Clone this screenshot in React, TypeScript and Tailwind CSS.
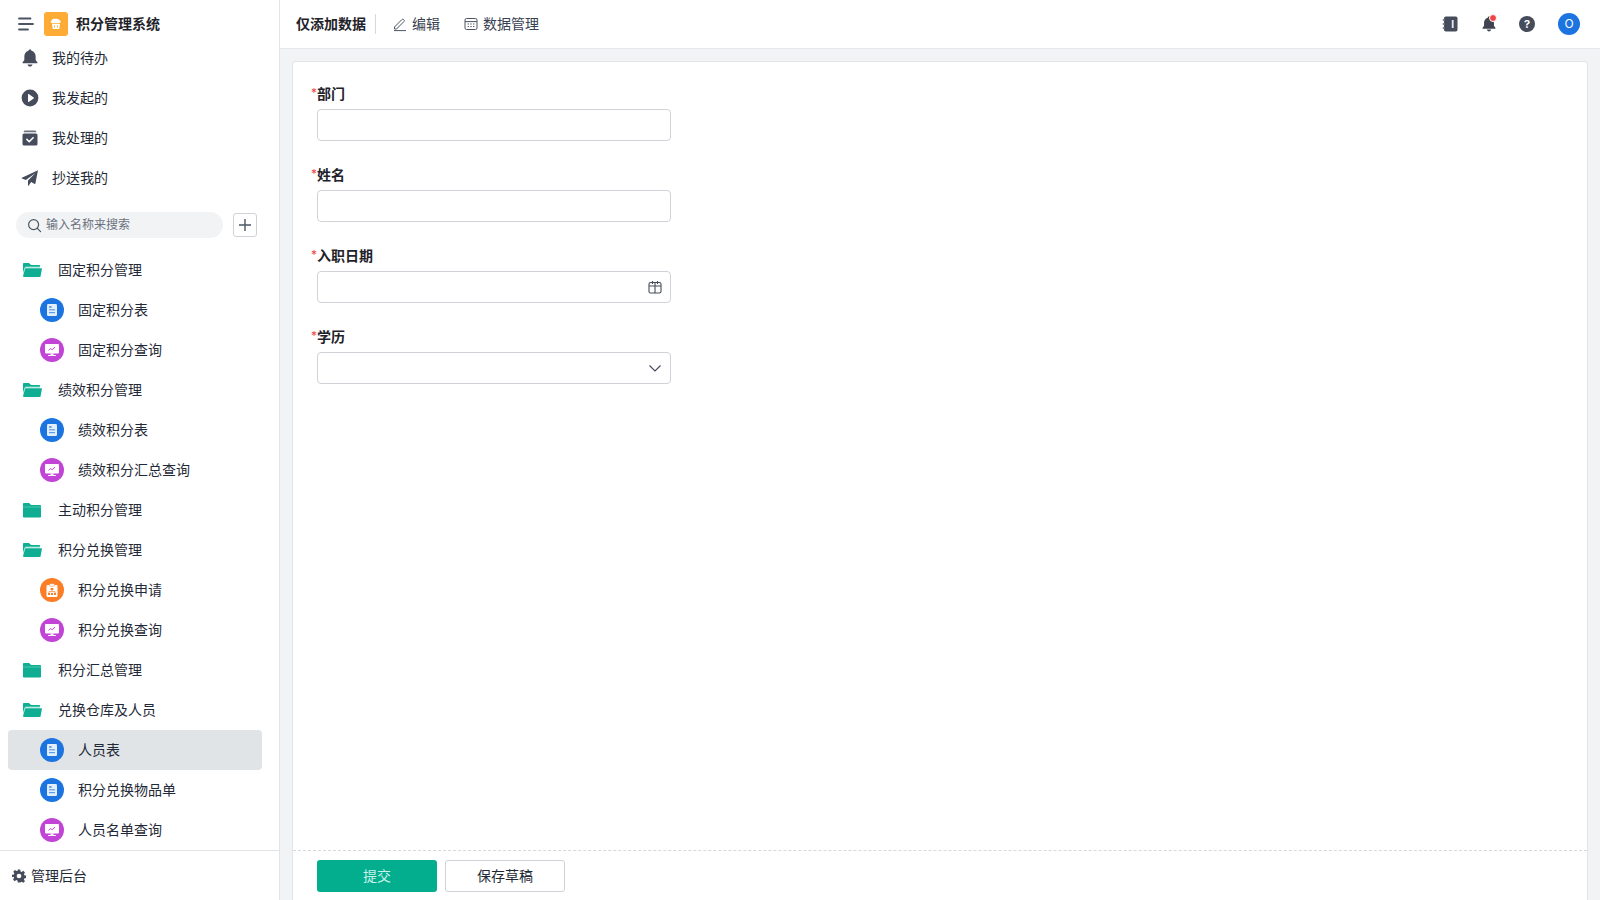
import React from "react";

const FONT = '"Inter", "Noto Sans CJK SC", sans-serif';

function Hamburger() {
  return (
    <svg width="16" height="14" viewBox="0 0 16 14" className="shrink-0">
      <path d="M1 1.5h11.5M1 7h14M1 12.5h9" stroke="#4b5563" strokeWidth="1.8" strokeLinecap="round" fill="none" />
    </svg>
  );
}

function Logo() {
  return (
    <div className="w-6 h-6 rounded-[3px] bg-[#fdab35] flex items-center justify-center shrink-0">
      <svg width="14" height="14" viewBox="0 0 14 14">
        <path d="M3 6.2C1.6 6 1.2 4.2 2.6 3.6 3 2 5 1.4 6 2.1c1-.7 3-.5 3.6.6 1.3-.2 2.8 1.4 1.8 2.8-.2.4-.7.7-1.2.7H3z" fill="#fff" />
        <path d="M3 7h8l-.7 5H3.7L3 7z" fill="#fff" />
        <path d="M5.5 8.4v2M8.5 8.4v2" stroke="#fdab35" strokeWidth="0.9" />
      </svg>
    </div>
  );
}

function Bell({ width = 16, height = 18, color = "#464c5b" }: { width?: number; height?: number; color?: string }) {
  return (
    <svg width={width} height={height} viewBox="1.5 0.8 15 16.4">
      <path d="M9 1c.8 0 1.3.5 1.4 1.2C13 3 14.3 5 14.3 7.6v3.2l1.7 2.4c.2.4 0 .8-.5.8h-13c-.5 0-.7-.4-.5-.8l1.7-2.4V7.6C3.7 5 5 3 7.6 2.2 7.7 1.5 8.2 1 9 1z" fill={color} />
      <path d="M6.6 15h4.8c-.3 1.2-1.3 2-2.4 2s-2.1-.8-2.4-2z" fill={color} />
    </svg>
  );
}

function PlayCircle() {
  return (
    <svg width="18" height="18" viewBox="0 0 18 18">
      <circle cx="9" cy="9" r="8.4" fill="#464c5b" />
      <path d="M7 5.4c0-.4.4-.6.7-.4l5 3.5c.3.2.3.7 0 .9l-5 3.6c-.3.2-.7 0-.7-.4V5.4z" fill="#fff" />
    </svg>
  );
}

function BoxCheck() {
  return (
    <svg width="16" height="16" viewBox="0 0 16 16">
      <path d="M3 .6h10c.6 0 1 .3 1.2.8l.2.9H1.6l.2-.9C2 .9 2.4.6 3 .6z" fill="#6b7180" />
      <rect x="0.5" y="3.4" width="15" height="12.2" rx="1.6" fill="#464c5b" />
      <path d="M4.9 9.4l2.3 2.3 3.9-4" stroke="#fff" strokeWidth="1.6" fill="none" strokeLinecap="round" strokeLinejoin="round" />
    </svg>
  );
}

function Plane() {
  return (
    <svg width="18" height="18" viewBox="0 0 18 18">
      <path d="M17 1.2L.9 8.8c-.3.2-.3.6 0 .7l4 1.4L14.5 4 7 11.6v4.7c0 .4.5.6.8.2l2.3-3.4 3.6 1.8c.3.1.6 0 .7-.3L17 1.2z" fill="#464c5b" />
    </svg>
  );
}

function Search() {
  return (
    <svg width="15" height="15" viewBox="0 0 15 15" className="shrink-0">
      <circle cx="6.6" cy="6.6" r="5" stroke="#4b5563" strokeWidth="1.2" fill="none" />
      <path d="M10.3 10.3l3.3 3.3" stroke="#4b5563" strokeWidth="1.2" strokeLinecap="round" />
    </svg>
  );
}

function FolderOpen() {
  return (
    <svg width="20" height="16" viewBox="0 0 20 16">
      <path d="M1 2c0-.6.4-1 1-1h5l2 2h8c.6 0 1 .4 1 1v1.2H4.2c-.8 0-1.4.5-1.6 1.2L1 11V2z" fill="#0fae92" />
      <path d="M3.4 6.2h15.8c.5 0 .8.4.7.9l-1.3 7.2c-.1.4-.4.7-.9.7H1.8c-.5 0-.8-.5-.7-.9l1.6-7.2c.1-.4.3-.7.7-.7z" fill="#0fae92" />
      <path d="M1.4 11.5L3 5.6c.1-.4.4-.6.8-.6H18" stroke="#a8ebdc" strokeWidth="0.7" fill="none" />
    </svg>
  );
}

function FolderClosed() {
  return (
    <svg width="20" height="16" viewBox="0 0 20 16">
      <path d="M1 2c0-.6.4-1 1-1h5.2l1.8 2h9c.6 0 1 .4 1 1v10.4c0 .6-.4 1-1 1H2c-.6 0-1-.4-1-1V2z" fill="#0fae92" />
      <path d="M1 5h18" stroke="#5fd6c0" strokeWidth="0.7" />
    </svg>
  );
}

function Doc() {
  return (
    <svg width="14" height="14" viewBox="0 0 14 14">
      <rect x="2" y="1" width="10" height="12" rx="1.2" fill="#e3effc" />
      <rect x="4" y="3.4" width="2.6" height="1.2" fill="#1b74e0" />
      <rect x="4" y="6.2" width="6" height="1.2" fill="#5b9dea" />
      <rect x="4" y="9" width="6" height="1.2" fill="#5b9dea" />
    </svg>
  );
}

function Monitor() {
  return (
    <svg width="16" height="14" viewBox="0 0 16 14">
      <rect x="1" y="1" width="14" height="9.6" rx="1" fill="#fff" />
      <rect x="6.6" y="10.4" width="2.8" height="1.8" fill="#fff" />
      <rect x="4" y="12" width="8" height="1" rx="0.5" fill="#fff" />
      <path d="M4.6 7.4l2-1.8 1.6 1.1 2.8-2.6" stroke="#c144d6" strokeWidth="1" fill="none" />
    </svg>
  );
}

function Org() {
  return (
    <svg width="14" height="15" viewBox="0 0 14 15">
      <rect x="1.5" y="2" width="11" height="12" rx="1" fill="#fff" />
      <rect x="4.5" y="0.8" width="5" height="2.4" rx="0.6" fill="#fff" stroke="#fb7d25" strokeWidth="0.5" />
      <rect x="5.7" y="5" width="2.6" height="2" fill="#fb7d25" />
      <path d="M7 7v1.4M4 10V8.6h6V10" stroke="#fb7d25" strokeWidth="0.7" fill="none" />
      <rect x="3" y="10" width="2" height="2" fill="#fb7d25" />
      <rect x="6" y="10" width="2" height="2" fill="#fb7d25" />
      <rect x="9" y="10" width="2" height="2" fill="#fb7d25" />
    </svg>
  );
}

function Gear() {
  return (
    <svg width="14" height="14" viewBox="0 0 24 24">
      <path
        fillRule="evenodd"
        clipRule="evenodd"
        d="M10 1h4l.7 3.2 1.9.8 2.8-1.8 2.8 2.8-1.8 2.8.8 1.9 3.2.7v4l-3.2.7-.8 1.9 1.8 2.8-2.8 2.8-2.8-1.8-1.9.8L14 23h-4l-.7-3.2-1.9-.8-2.8 1.8-2.8-2.8 1.8-2.8-.8-1.9L0 14v-4l3.2-.7.8-1.9-1.8-2.8 2.8-2.8 2.8 1.8 1.9-.8L10 1zm2 7a4 4 0 1 0 0 8 4 4 0 0 0 0-8z"
        fill="#464c5b"
      />
    </svg>
  );
}

function MenuRow({ icon, label }: { icon: React.ReactNode; label: string }) {
  return (
    <div className="h-10 flex items-center pl-[21px]">
      <div className="w-[18px] h-[18px] flex items-center justify-center shrink-0">{icon}</div>
      <span className="ml-[13px] text-sm text-[#1f2937]">{label}</span>
    </div>
  );
}

function GroupRow({ open = true, label }: { open?: boolean; label: string }) {
  return (
    <div className="h-10 flex items-center pl-[22px]">
      <div className="w-5 h-4 flex items-center shrink-0">{open ? <FolderOpen /> : <FolderClosed />}</div>
      <span className="ml-4 text-sm text-[#1f2937]">{label}</span>
    </div>
  );
}

type Kind = "doc" | "chart" | "org";

function LeafRow({ kind, label, active = false }: { kind: Kind; label: string; active?: boolean }) {
  const bg = kind === "doc" ? "bg-[#1b74e0]" : kind === "chart" ? "bg-[#c144d6]" : "bg-[#fb7d25]";
  return (
    <div className={`h-10 ml-2 mr-[17px] flex items-center pl-8 rounded-[4px] ${active ? "bg-[#e1e4e6]" : ""}`}>
      <div className={`w-6 h-6 rounded-full flex items-center justify-center shrink-0 ${bg}`}>
        {kind === "doc" ? <Doc /> : kind === "chart" ? <Monitor /> : <Org />}
      </div>
      <span className="ml-[14px] text-sm text-[#1f2937]">{label}</span>
    </div>
  );
}

function Sidebar() {
  return (
    <aside className="w-[280px] h-full shrink-0 bg-white border-r border-[#e2e5e8] flex flex-col">
      <div className="h-[38px] pt-3 pl-[18px] flex items-start shrink-0">
        <div className="h-6 flex items-center">
          <Hamburger />
        </div>
        <div className="ml-[10px]">
          <Logo />
        </div>
        <span className="ml-2 h-6 leading-6 text-sm font-semibold text-[#1f2329]">积分管理系统</span>
      </div>
      <MenuRow icon={<Bell />} label="我的待办" />
      <MenuRow icon={<PlayCircle />} label="我发起的" />
      <MenuRow icon={<BoxCheck />} label="我处理的" />
      <MenuRow icon={<Plane />} label="抄送我的" />
      <div className="mt-[14px] mb-3 h-[26px] pl-4 flex items-center shrink-0">
        <div className="w-[207px] h-[26px] rounded-full bg-[#f1f3f4] flex items-center pl-[11px]">
          <Search />
          <span className="ml-[4px] text-xs text-[#6b7280]">输入名称来搜索</span>
        </div>
        <button className="ml-[10px] w-6 h-6 rounded-[3px] border border-[#cfd3d7] bg-white flex items-center justify-center">
          <svg width="14" height="14" viewBox="0 0 14 14">
            <path d="M7 1v12M1 7h12" stroke="#4b5563" strokeWidth="1.4" />
          </svg>
        </button>
      </div>
      <GroupRow label="固定积分管理" />
      <LeafRow kind="doc" label="固定积分表" />
      <LeafRow kind="chart" label="固定积分查询" />
      <GroupRow label="绩效积分管理" />
      <LeafRow kind="doc" label="绩效积分表" />
      <LeafRow kind="chart" label="绩效积分汇总查询" />
      <GroupRow open={false} label="主动积分管理" />
      <GroupRow label="积分兑换管理" />
      <LeafRow kind="org" label="积分兑换申请" />
      <LeafRow kind="chart" label="积分兑换查询" />
      <GroupRow open={false} label="积分汇总管理" />
      <GroupRow label="兑换仓库及人员" />
      <LeafRow kind="doc" label="人员表" active />
      <LeafRow kind="doc" label="积分兑换物品单" />
      <LeafRow kind="chart" label="人员名单查询" />
      <div className="flex-1 border-t border-[#e2e5e8] flex items-center pl-3">
        <Gear />
        <span className="ml-[5px] text-sm text-[#1f2937]">管理后台</span>
      </div>
    </aside>
  );
}

function Header() {
  return (
    <header className="h-[49px] shrink-0 bg-white border-b border-[#e6e8eb] flex items-center pl-4 pr-[20px]">
      <span className="text-sm font-semibold text-[#1f2329]">仅添加数据</span>
      <div className="ml-[9px] w-px h-5 bg-[#d5d8dc]" />
      <svg width="16" height="16" viewBox="0 0 16 16" className="ml-[16px]">
        <path d="M2.5 11l7.4-7.4c.5-.5 1.3-.5 1.8 0l.2.2c.5.5.5 1.3 0 1.8L4.5 13H2.5v-2z" stroke="#4b5563" strokeWidth="1" fill="none" />
        <path d="M2 14.6h12" stroke="#4b5563" strokeWidth="1" />
      </svg>
      <span className="ml-[4px] text-sm text-[#374151]">编辑</span>
      <svg width="14" height="14" viewBox="0 0 14 14" className="ml-[24px]">
        <rect x="1" y="1.5" width="12" height="11" rx="1.6" stroke="#4b5563" strokeWidth="1" fill="none" />
        <path d="M1 4.6h12" stroke="#4b5563" strokeWidth="1" />
        <path d="M3.6 7h1.4M6.3 7h1.4M9 7h1.4M3.6 9.6h1.4M6.3 9.6h1.4M9 9.6h1.4" stroke="#4b5563" strokeWidth="1" />
      </svg>
      <span className="ml-[5px] text-sm text-[#374151]">数据管理</span>
      <div className="ml-auto flex items-center">
        <svg width="16" height="16" viewBox="0 0 16 16">
          <rect x="2" y="0.5" width="13.5" height="15" rx="1.8" fill="#464c5b" />
          <path d="M0.8 4h2.4M0.8 8h2.4M0.8 12h2.4" stroke="#464c5b" strokeWidth="1.4" />
          <path d="M1.8 4h1M1.8 8h1M1.8 12h1" stroke="#fff" strokeWidth="0.5" />
          <rect x="9.8" y="4" width="1.8" height="8" fill="#e5e7eb" />
        </svg>
        <div className="relative ml-[24px] w-[14px] h-4">
          <Bell width={14} height={16} color="#3f4450" />
          <span className="absolute -top-[2px] right-[-1px] w-[6px] h-[6px] rounded-full bg-[#ef4444] border border-white box-content" />
        </div>
        <div className="ml-[23px] w-4 h-4 rounded-full bg-[#464c5b] text-white text-[11px] leading-4 font-bold text-center">?</div>
        <div className="ml-[23px] w-[22px] h-[22px] rounded-full bg-[#1b74e0] text-white text-xs flex items-center justify-center">
          O
        </div>
      </div>
    </header>
  );
}

function Label({ text }: { text: string }) {
  return (
    <div className="h-[22px] leading-[22px] text-sm font-semibold text-[#1f2329] flex">
      <span className="w-[6px] mt-[2px] text-[#ef4444] font-normal text-xs">*</span>
      {text}
    </div>
  );
}

function Field({ label, icon }: { label: string; icon?: React.ReactNode }) {
  return (
    <div className="mb-[23px]">
      <Label text={label} />
      <div className="mt-1 ml-[6px] w-[354px] h-8 rounded-[4px] border border-[#cfd3d7] bg-white flex items-center justify-end pr-2">
        {icon}
      </div>
    </div>
  );
}

function Form() {
  return (
    <main className="flex-1 min-h-0 bg-[#f1f3f4] pt-3 pl-3 pr-3">
      <div className="h-full w-[1296px] bg-white border border-[#e2e5e8] border-b-0 rounded-t-[4px] flex flex-col">
        <div className="flex-1 pt-[21px] pl-[18px]">
          <Field label="部门" />
          <Field label="姓名" />
          <Field
            label="入职日期"
            icon={
              <svg width="14" height="14" viewBox="0 0 14 14">
                <rect x="1" y="2.5" width="12" height="10.5" rx="1.6" stroke="#464c5b" strokeWidth="1.1" fill="none" />
                <path d="M1 6h12M7 2.5V13M4.5 1v3M9.5 1v3" stroke="#464c5b" strokeWidth="1.1" />
              </svg>
            }
          />
          <Field
            label="学历"
            icon={
              <svg width="14" height="14" viewBox="0 0 14 14">
                <path d="M1.5 4.5L7 10l5.5-5.5" stroke="#464c5b" strokeWidth="1.2" fill="none" />
              </svg>
            }
          />
        </div>
        <div className="h-[50px] shrink-0 border-t border-dashed border-[#d5d8dc] pt-[9px] pl-6 flex items-start gap-2">
          <button className="w-[120px] h-8 rounded-[3px] bg-[#03ae8f] text-sm text-[#c9f1e8]">提交</button>
          <button className="w-[120px] h-8 rounded-[3px] bg-white border border-[#cfd3d7] text-sm text-[#1f2937]">保存草稿</button>
        </div>
      </div>
    </main>
  );
}

export default function App() {
  return (
    <div className="w-[1600px] h-[900px] flex overflow-hidden bg-white" style={{ fontFamily: FONT }}>
      <Sidebar />
      <div className="flex-1 min-w-0 flex flex-col">
        <Header />
        <Form />
      </div>
    </div>
  );
}
